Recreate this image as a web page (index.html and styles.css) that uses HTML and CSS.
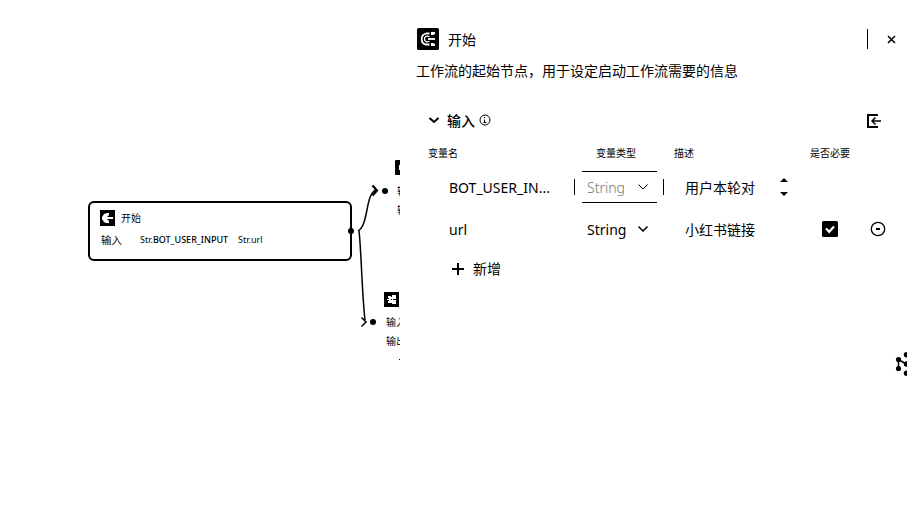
FILE: index.html
```html
<!DOCTYPE html>
<html lang="zh-CN">
<head>
<meta charset="utf-8">
<title>工作流</title>
<link rel="stylesheet" href="styles.css">
</head>
<body>
<main class="app">
  <section class="canvas">
    <svg class="edges" width="400" height="525" viewBox="0 0 400 525">
      <path d="M358 231C369 225 365 194 376 190M359 231C361 245 362 295 365 320"/>
      <path d="M372.500 185.500L377 190.500L372.500 195.500" class="arrow"/>
      <path d="M361.500 317.500L366 322L361.500 326.500"/>
    </svg>
    <article class="node node-start">
      <header class="node-head">
        <svg class="node-icon" viewBox="0 0 15 16"><path fill="#000" d="M0 0h15v16H0z"/><path fill="#fff" d="M7 3h2v2l-2 2h6v2H7l2 2v2H6L4 12 2 9V7l2-3z"/></svg>
        <span class="node-title">开始</span>
      </header>
      <div class="node-row"><span class="node-key">输入</span><span class="node-var">Str.<b>BOT_USER_INPUT</b></span><span class="node-var last">Str.url</span></div>
    </article>
    <i class="port port-out"></i>
    <i class="port port-top"></i>
    <i class="port port-bottom"></i>
    <article class="node-cut node-a">
      <svg class="cut-icon" viewBox="0 0 15 15"><rect width="15" height="15" rx="1"/><path fill="#fff" d="M4 5h7v5H4z"/></svg>
      <span>输入</span><span>输出</span>
    </article>
    <article class="node-cut node-b">
      <svg class="cut-icon" viewBox="0 0 15 15"><path d="M0 0h15v15H0z"/><path fill="#fff" d="M4 4h3v1h1V3h4v4H9v1h3v4H8v-1H4V9h1V8H3V7h2V6H4z"/><path d="M7 7h1v1H7zM9 7h3v1H9z"/></svg>
      <span>输入</span><span>输出</span><i class="speck"></i>
    </article>
  </section>

  <aside class="panel">
    <header class="panel-head">
      <svg width="22" height="22" viewBox="0 0 22 22"><rect width="22" height="22" rx="1.500"/><g fill="none" stroke="#fff" stroke-width="1.800"><path d="M12.500 5.500H9C3 7 3.500 15.500 9 16.500H12.500"/><path d="M12.500 8.800C9.500 7 7.500 9 7.500 11C7.500 13.500 10 14.800 12.500 13.200" stroke-width="1.300"/><path d="M11 11h7"/></g><path fill="#fff" d="M14 4h4v2l-2 1h-2zM14 15h2l2 1v2h-4z"/></svg>
      <h1>开始</h1>
      <span class="divider"></span>
      <svg width="9" height="9" viewBox="0 0 9 9" class="line close"><path d="M1 1l7 7M8 1L1 8"/></svg>
    </header>
    <p class="desc">工作流的起始节点，用于设定启动工作流需要的信息</p>
    <div class="section-head">
      <svg width="12" height="8" viewBox="0 0 12 8" class="line"><path d="M1.500 1L6 5L10.500 1" stroke-width="2"/></svg>
      <h2>输入</h2>
      <svg width="12" height="12" viewBox="0 0 12 12" class="line info"><circle cx="6" cy="6" r="5"/><path d="M5.500 3v1.200M5.500 5.500v2.500M4.500 8.500h3"/></svg>
      <svg width="15" height="14" viewBox="0 0 15 14" class="line import"><path d="M11 1H1v12h10" stroke-width="2"/><path d="M14 7H5M8.500 3.500L5 7l3.500 3.500" stroke-width="1.500"/></svg>
    </div>
    <div class="row labels"><span>变量名</span><span class="c-type">变量类型</span><span>描述</span><span>是否必要</span></div>
    <div class="row fields">
      <span class="name long">BOT_USER_IN...</span>
      <span class="type-wrap"><i class="side"></i><span class="type disabled"><span class="str">String</span><svg width="10" height="6" viewBox="0 0 10 6" class="line"><path d="M.5.5L5 5L9.500.5"/></svg></span><i class="side"></i></span>
      <span class="text">用户本轮对</span>
      <svg class="spinner" width="8" height="18" viewBox="0 0 8 18"><path d="M0 4L4 0L8 4zM0 14h8L4 18z"/></svg>
    </div>
    <div class="row fields second">
      <span class="name">url</span>
      <span class="type-wrap"><i class="side hidden"></i><span class="type"><span class="str">String</span><svg width="10" height="6" viewBox="0 0 10 6" class="line"><path d="M.5.5L5 5L9.500.5" stroke-width="1.500"/></svg></span></span>
      <span class="text">小红书链接</span>
      <svg class="check" width="16" height="16" viewBox="0 0 16 16"><rect width="16" height="16" rx="1.500"/><path d="M4 7.500L7.200 10.800L12 5.500" fill="none" stroke="#fff" stroke-width="2.200"/></svg>
      <svg class="line remove" width="16" height="16" viewBox="0 0 16 16"><circle cx="8" cy="8" r="6.700" stroke-width="1.300"/><path d="M6 8h4" stroke-width="2"/></svg>
    </div>
    <div class="add"><svg width="12" height="12" viewBox="0 0 12 12" class="line"><path d="M6 0v12M0 6h12" stroke-width="2"/></svg><span>新增</span></div>
  </aside>
  <svg class="float-icon" width="12" height="24" viewBox="0 0 12 24"><path d="M3.500 7v9M3.500 7.500L11 12" fill="none" stroke="#000" stroke-width="1.500"/><circle cx="3.500" cy="7.500" r="2.600"/><circle cx="3.500" cy="16.500" r="2.600"/><circle cx="11.500" cy="2.800" r="2.700"/><circle cx="11.500" cy="12" r="2.700"/><circle cx="11.500" cy="21.200" r="2.700"/></svg>
</main>
</body>
</html>
```
FILE: styles.css
```css
* { box-sizing: border-box; }
body { margin: 0; background: #fff; color: #000; font: 14px/20px "Noto Sans", "Noto Sans CJK SC", sans-serif; overflow: hidden; }
h1, h2, p { margin: 0; font-size: 14px; font-weight: 400; }
svg { display: block; flex: none; }
.app { position: relative; display: flex; width: 907px; height: 525px; }
.line { fill: none; stroke: #000; }

.canvas { position: relative; width: 400px; flex: none; overflow: hidden; }
.edges { position: absolute; left: 0; top: 0; fill: none; stroke: #000; stroke-width: 1.5; }
.arrow { stroke-width: 2.2; }
.node { position: absolute; left: 88px; top: 201px; width: 264px; height: 60px; border: 2px solid #000; border-radius: 6px; padding: 7px 10px; font-size: 10px; }
.node-head { display: flex; align-items: center; gap: 6px; height: 16px; }
.node-icon { width: 15px; height: 16px; }
.node-title { line-height: 16px; }
.node-row { display: flex; align-items: center; height: 14px; margin-top: 7px; line-height: 14px; padding-left: 1px; }
.node-key { width: 39px; font-size: 10.5px; }
.node-var { width: 98px; font-size: 9px; white-space: nowrap; }
.node-var b { font-weight: 500; }
.node-var.last { width: auto; }
.port { position: absolute; width: 6px; height: 6px; border-radius: 50%; background: #000; }
.port-out { left: 348px; top: 228px; }
.port-top { left: 382px; top: 188px; }
.port-bottom { left: 370px; top: 319px; }
.node-cut { position: absolute; width: 60px; display: flex; flex-direction: column; font-size: 10px; line-height: 19px; padding-left: 2px; }
.cut-icon { width: 15px; height: 15px; margin: 0 0 6px -2px; }
.node-a { left: 395px; top: 160px; }
.node-a .cut-icon { margin-bottom: 7px; }
.node-b { left: 384px; top: 292px; }
.speck { width: 1px; height: 1px; margin: 8px 0 0 13px; background: #000; }

.panel { flex: 1; padding: 28px 11px 0 17px; }
.panel-head { display: flex; align-items: center; height: 22px; }
.panel-head h1 { margin-left: 9px; padding-top: 1px; }
.divider { width: 1px; height: 20px; background: #000; margin-left: auto; }
.close { margin-left: 19px; stroke-width: 1.5; }
.desc { margin: 11px 0 0 -1px; white-space: nowrap; }
.section-head { display: flex; align-items: center; height: 20px; margin: 30px 14px 0 11px; }
.section-head h2 { margin-left: 7px; font-weight: 500; }
.info { margin: 0 0 2px 4px; }
.import { margin-left: auto; }
.row { display: grid; align-items: center; white-space: nowrap; }
.labels { grid-template-columns: 168px 78px 136px 1fr; height: 20px; margin: 12px 0 0 11px; font-size: 10px; }
.fields { grid-template-columns: 125px 111px 95px 42px 1fr; height: 42px; margin-left: 32px; }
.labels + .fields { margin-top: 3px; }
.name, .str, .text { padding-top: 2px; }
.type-wrap { display: flex; align-items: center; }
.side { width: 1px; height: 16px; background: #000; }
.hidden { visibility: hidden; }
.type { display: flex; align-items: center; width: 75px; height: 32px; margin: 0 6px 0 7px; padding-left: 5px; }
.type .str { width: 51px; }
.disabled { border-top: 1px solid #000; border-bottom: 1px solid #000; }
.disabled .str { color: #777; font-weight: 300; }
.fields .check { margin-left: 42px; }
.remove { margin-left: 48px; }
.add { display: flex; align-items: center; gap: 9px; height: 20px; margin: 9px 0 0 35px; }
.float-icon { position: absolute; left: 895px; top: 352px; }
```
